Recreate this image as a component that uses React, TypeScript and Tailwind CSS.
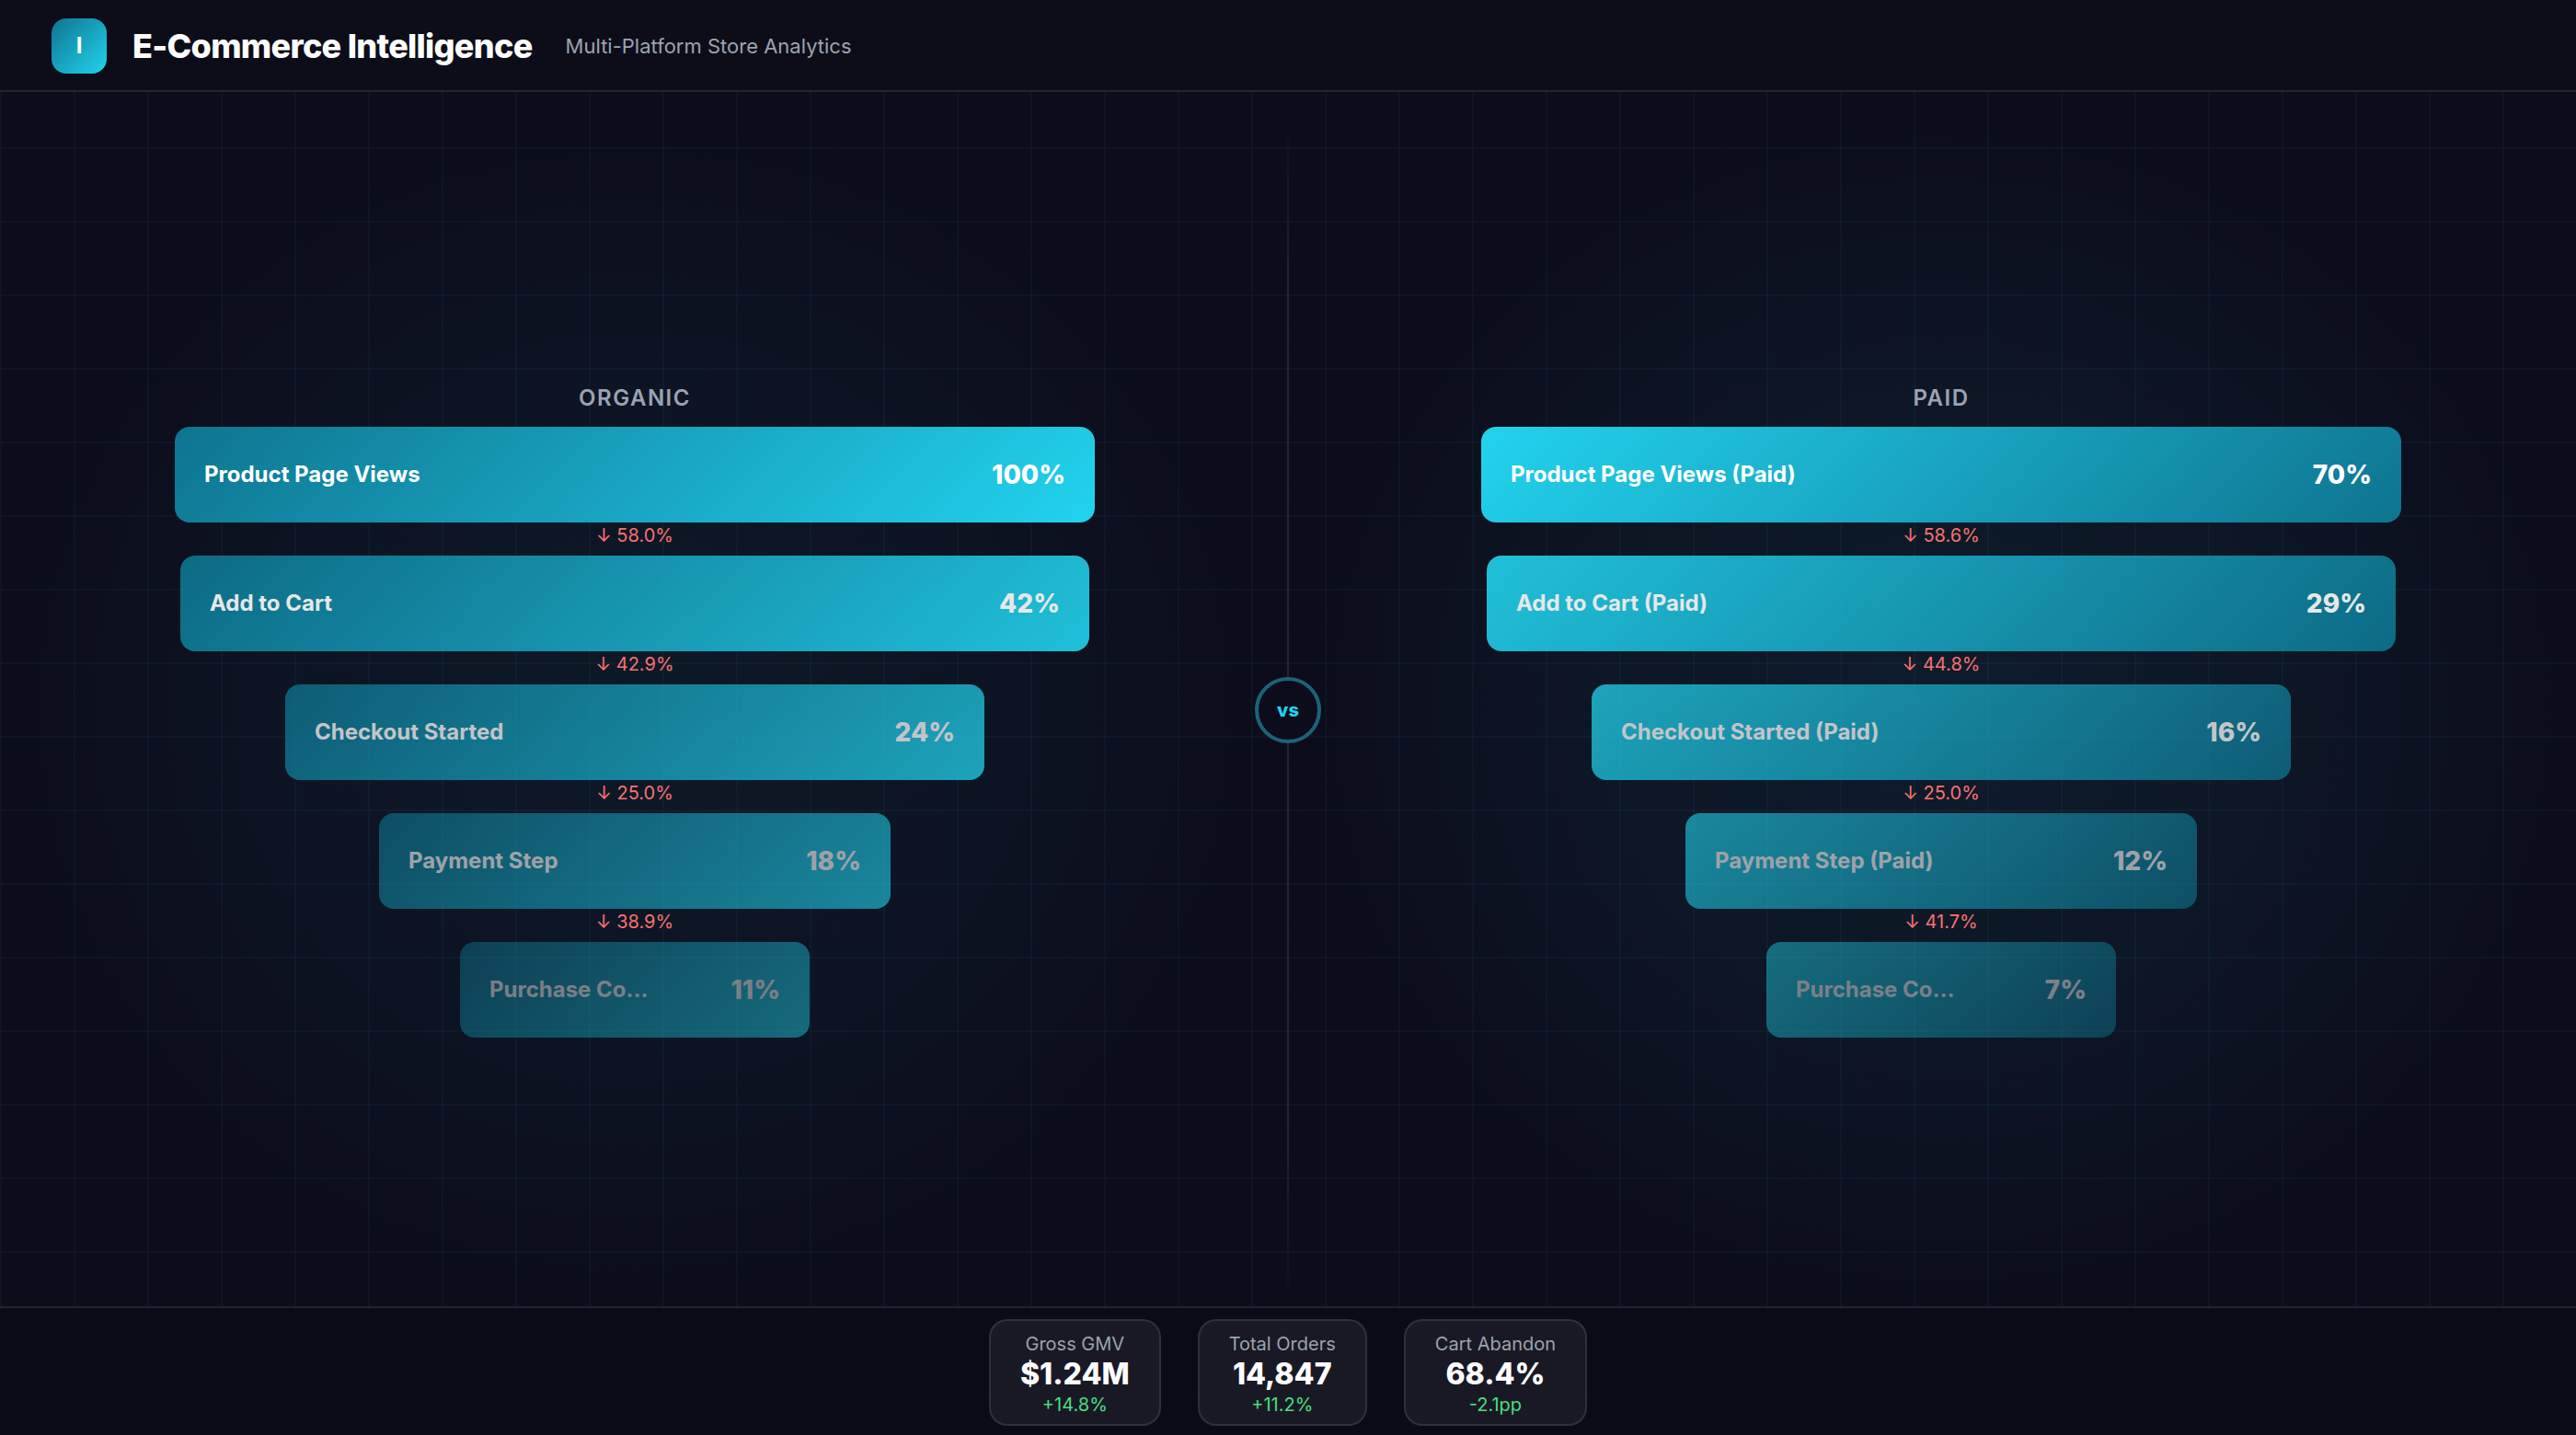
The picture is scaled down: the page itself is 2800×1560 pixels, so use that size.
import React from "react";

type Step = { label: string; value: string; width: string; fade: string; drop?: string };

const organic: Step[] = [
  { label: "Product Page Views", value: "100%", width: "w-[1000px]", fade: "opacity-100", drop: "58.0%" },
  { label: "Add to Cart", value: "42%", width: "w-[988px]", fade: "opacity-90", drop: "42.9%" },
  { label: "Checkout Started", value: "24%", width: "w-[760px]", fade: "opacity-75", drop: "25.0%" },
  { label: "Payment Step", value: "18%", width: "w-[556px]", fade: "opacity-60", drop: "38.9%" },
  { label: "Purchase Co…", value: "11%", width: "w-[380px]", fade: "opacity-45" },
];

const paid: Step[] = [
  { label: "Product Page Views (Paid)", value: "70%", width: "w-[1000px]", fade: "opacity-100", drop: "58.6%" },
  { label: "Add to Cart (Paid)", value: "29%", width: "w-[988px]", fade: "opacity-90", drop: "44.8%" },
  { label: "Checkout Started (Paid)", value: "16%", width: "w-[760px]", fade: "opacity-75", drop: "25.0%" },
  { label: "Payment Step (Paid)", value: "12%", width: "w-[556px]", fade: "opacity-60", drop: "41.7%" },
  { label: "Purchase Co…", value: "7%", width: "w-[380px]", fade: "opacity-45" },
];

function Funnel({ title, steps, reverse }: { title: string; steps: Step[]; reverse?: boolean }) {
  return (
    <section
      className={
        "flex-1 flex flex-col items-center justify-center " +
        (reverse
          ? "bg-[radial-gradient(ellipse_at_center,rgba(34,211,238,0.08),rgba(34,211,238,0.05)_40%,transparent_72%)]"
          : "bg-[radial-gradient(ellipse_at_center,rgba(34,211,238,0.065),rgba(34,211,238,0.04)_40%,transparent_72%)]")
      }
    >
      <h2 className="text-2xl leading-[34px] font-semibold tracking-[1.5px] text-[#9ca3af] mb-[14px]">{title}</h2>
      <div className="flex flex-col items-center w-[1000px]">
        {steps.map((s) => (
          <React.Fragment key={s.label + s.value}>
            <div
              className={
                "h-[104px] rounded-2xl flex items-center justify-between px-8 text-white " +
                s.width +
                " " +
                s.fade +
                " " +
                (reverse
                  ? "bg-[linear-gradient(135deg,#22d3ee,#0e7490)]"
                  : "bg-[linear-gradient(135deg,#0e7490,#22d3ee)]")
              }
            >
              <span className="text-2xl font-bold">{s.label}</span>
              <span className="text-[28px] font-extrabold">{s.value}</span>
            </div>
            {s.drop && (
              <div className="h-9 text-xl leading-7 text-[#f87171]">↓ {s.drop}</div>
            )}
          </React.Fragment>
        ))}
      </div>
    </section>
  );
}

function Stat({ label, value, delta }: { label: string; value: string; delta: string }) {
  return (
    <div className="flex flex-col items-center px-8 pt-1 h-[116px] justify-center rounded-[20px] border-2 border-white/10 bg-white/[0.06]">
      <span className="text-xl leading-[30px] text-[#9ca3af]">{label}</span>
      <span className="text-[32px] leading-9 font-extrabold text-white">{value}</span>
      <span className="text-xl leading-[30px] text-[#4ade80]">{delta}</span>
    </div>
  );
}

export default function App() {
  return (
    <div className="w-[2800px] h-[1560px] overflow-hidden flex flex-col font-['Inter',sans-serif] bg-[#0c0c1a] bg-[linear-gradient(rgba(34,211,238,0.04)_2px,transparent_2px),linear-gradient(90deg,rgba(34,211,238,0.04)_2px,transparent_2px)] bg-[length:80px_80px]">
      <header className="h-[100px] shrink-0 flex items-center px-14 pt-0.5 border-b-2 border-white/10 bg-[#0d0d1a]">
        <div className="w-[60px] h-[60px] rounded-2xl flex items-center justify-center text-white text-2xl font-bold bg-[linear-gradient(135deg,#0e7490,#22d3ee)]">
          I
        </div>
        <h1 className="ml-7 text-[36px] font-extrabold tracking-[-0.7px] text-white">E-Commerce Intelligence</h1>
        <span className="ml-9 text-[22px] text-[#9ca3af]">Multi-Platform Store Analytics</span>
      </header>
      <main className="relative flex-1 flex pt-6">
        <Funnel title="ORGANIC" steps={organic} />
        <div className="relative w-10 flex items-center justify-center">
          <div className="absolute inset-y-0 left-[19px] w-[2px] bg-[linear-gradient(180deg,transparent,rgba(255,255,255,0.1)_15%,rgba(255,255,255,0.1)_85%,transparent)]" />
          <div className="relative w-[72px] h-[72px] shrink-0 rounded-full border-4 border-[#1b6478] bg-[#0c0c1a] flex items-center justify-center text-[20px] font-extrabold text-[#22d3ee]">
            vs
          </div>
        </div>
        <Funnel title="PAID" steps={paid} reverse />
      </main>
      <footer className="h-[140px] shrink-0 flex items-start justify-center gap-10 pt-3 border-t-2 border-white/10 bg-[#0b0b18]/90">
        <Stat label="Gross GMV" value="$1.24M" delta="+14.8%" />
        <Stat label="Total Orders" value="14,847" delta="+11.2%" />
        <Stat label="Cart Abandon" value="68.4%" delta="-2.1pp" />
      </footer>
    </div>
  );
}
